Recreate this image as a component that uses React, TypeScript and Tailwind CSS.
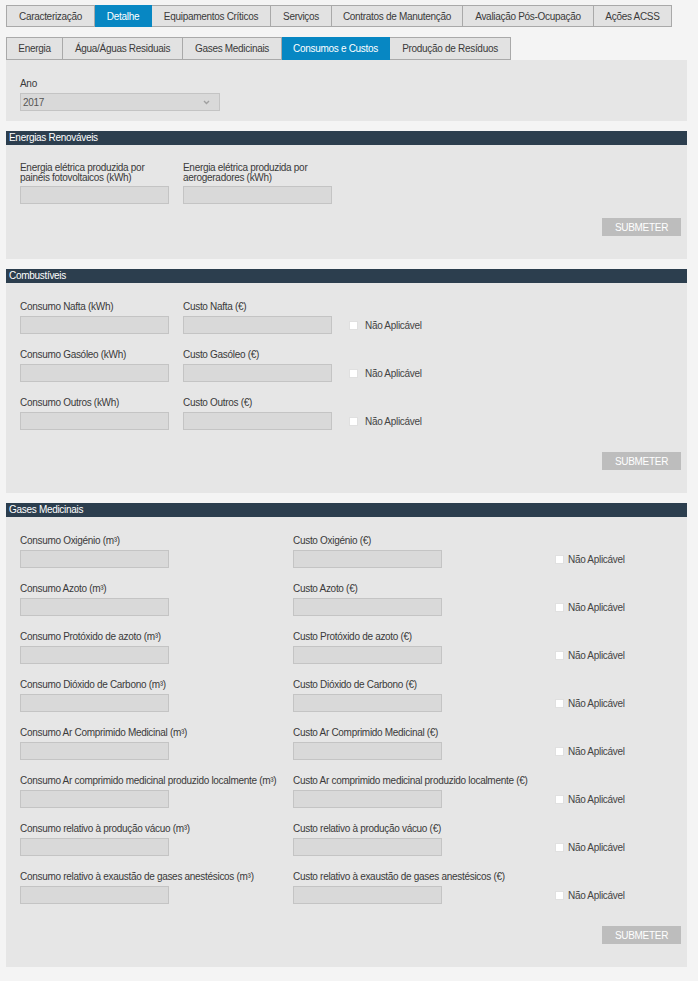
import React from "react";

const topTabs = [
  { label: "Caracterização", w: "w-[89px]" },
  { label: "Detalhe", w: "w-[57px]", active: true },
  { label: "Equipamentos Críticos", w: "w-[119px]" },
  { label: "Serviços", w: "w-[61px]" },
  { label: "Contratos de Manutenção", w: "w-[131px]" },
  { label: "Avaliação Pós-Ocupação", w: "w-[131px]" },
  { label: "Ações ACSS", w: "w-[78px]" },
];

const subTabs = [
  { label: "Energia", w: "w-[57px]" },
  { label: "Água/Águas Residuais", w: "w-[120px]" },
  { label: "Gases Medicinais", w: "w-[99px]" },
  { label: "Consumos e Custos", w: "w-[108px]", active: true },
  { label: "Produção de Resíduos", w: "w-[121px]" },
];

const combustiveis = [
  ["Consumo Nafta (kWh)", "Custo Nafta (€)"],
  ["Consumo Gasóleo (kWh)", "Custo Gasóleo (€)"],
  ["Consumo Outros (kWh)", "Custo Outros (€)"],
];

const gases = [
  ["Consumo Oxigénio (m³)", "Custo Oxigénio (€)"],
  ["Consumo Azoto (m³)", "Custo Azoto (€)"],
  ["Consumo Protóxido de azoto (m³)", "Custo Protóxido de azoto (€)"],
  ["Consumo Dióxido de Carbono (m³)", "Custo Dióxido de Carbono (€)"],
  ["Consumo Ar Comprimido Medicinal (m³)", "Custo Ar Comprimido Medicinal (€)"],
  [
    "Consumo Ar comprimido medicinal produzido localmente (m³)",
    "Custo Ar comprimido medicinal produzido localmente (€)",
  ],
  ["Consumo relativo à produção vácuo (m³)", "Custo relativo à produção vácuo (€)"],
  [
    "Consumo relativo à exaustão de gases anestésicos (m³)",
    "Custo relativo à exaustão de gases anestésicos (€)",
  ],
];

export default function App() {
  return (
    <div className="w-[698px] min-h-[981px] bg-[#f4f4f4] pt-[5px] pl-[6px] pb-[12px] font-['Liberation_Sans',Arial,sans-serif] text-[10px] tracking-[-0.3px] text-[#3a3a3a]">
      {/* main tabs */}
      <div className="flex">
        {topTabs.map((t, i) => (
          <Tab key={t.label} {...t} first={i === 0} h="h-[22px]" />
        ))}
      </div>

      {/* sub tabs */}
      <div className="flex mt-[10px]">
        {subTabs.map((t, i) => (
          <Tab key={t.label} {...t} first={i === 0} h="h-[23px]" />
        ))}
      </div>

      <div className="w-[681px]">
        {/* year selector */}
        <div className="bg-[#e6e6e6] pt-[18px] pb-[10px] pl-[14px]">
          <div className="leading-[12px]">Ano</div>
          <div className="mt-[3px] w-[200px] h-[18px] bg-[#d9d9d9] border border-[#c4c4c4] flex items-center justify-between pl-[2px] pr-[9px] text-[#555]">
            <span>2017</span>
            <svg width="7" height="5" viewBox="0 0 7 5" className="text-[#a0a0a0]">
              <path d="M1 1l2.5 2.5L6 1" stroke="currentColor" strokeWidth="1.4" fill="none" />
            </svg>
          </div>
        </div>

        {/* Energias Renováveis */}
        <SectionHeader title="Energias Renováveis" />
        <div className="bg-[#e6e6e6] pt-[18px] pb-[23px] pl-[14px] pr-[6px]">
          <div className="flex">
            <div className="w-[163px]">
              <div className="leading-[10px] h-[20px]">
                Energia elétrica produzida por
                <br />
                painéis fotovoltaicos (kWh)
              </div>
              <Input />
            </div>
            <div className="w-[166px]">
              <div className="leading-[10px] h-[20px]">
                Energia elétrica produzida por
                <br />
                aerogeradores (kWh)
              </div>
              <Input />
            </div>
          </div>
          <Submit className="mt-[14px]" />
        </div>

        {/* Combustíveis */}
        <SectionHeader title="Combustíveis" />
        <div className="bg-[#e6e6e6] pt-[17px] pb-[23px] pl-[14px] pr-[6px]">
          <div className="flex flex-col gap-[14px]">
            {combustiveis.map(([a, b]) => (
              <FieldRow key={a} a={a} b={b} colA="w-[163px]" colB="w-[166px]" gap="gap-[7px]" />
            ))}
          </div>
          <Submit className="mt-[22px]" />
        </div>

        {/* Gases Medicinais */}
        <SectionHeader title="Gases Medicinais" />
        <div className="bg-[#e6e6e6] pt-[17px] pb-[23px] pl-[14px] pr-[6px]">
          <div className="flex flex-col gap-[14px]">
            {gases.map(([a, b]) => (
              <FieldRow key={a} a={a} b={b} colA="w-[273px]" colB="w-[262px]" gap="gap-[4px]" />
            ))}
          </div>
          <Submit className="mt-[22px]" />
        </div>
      </div>
    </div>
  );
}

/* --- HELPERS --- */

const Tab = ({
  label,
  w,
  h,
  active,
  first,
}: {
  label: string;
  w: string;
  h: string;
  active?: boolean;
  first?: boolean;
}) => (
  <div
    className={`${w} ${h} flex items-center justify-center border-y border-r ${
      first ? "border-l" : ""
    } ${
      active
        ? "bg-[#0787c3] border-[#0787c3] text-white"
        : "bg-[#e2e2e2] border-[#a9a9a9] text-[#3a3a3a]"
    }`}
  >
    {label}
  </div>
);

const SectionHeader = ({ title }: { title: string }) => (
  <div className="mt-[10px] h-[14px] bg-[#2c3e4e] text-white pl-[3px] leading-[14px]">{title}</div>
);

const Input = () => (
  <div className="mt-[3px] w-[149px] h-[18px] bg-[#d9d9d9] border border-[#c4c4c4]" />
);

const Submit = ({ className }: { className: string }) => (
  <div className={`flex justify-end ${className}`}>
    <div className="w-[79px] h-[18px] bg-[#bdbdbd] text-white text-[10px] flex items-center justify-center">
      SUBMETER
    </div>
  </div>
);

const FieldRow = ({
  a,
  b,
  colA,
  colB,
  gap,
}: {
  a: string;
  b: string;
  colA: string;
  colB: string;
  gap: string;
}) => (
  <div className="flex">
    <div className={colA}>
      <div className="leading-[13px] whitespace-nowrap">{a}</div>
      <Input />
    </div>
    <div className={colB}>
      <div className="leading-[13px] whitespace-nowrap">{b}</div>
      <Input />
    </div>
    <div className={`pt-[16px] h-[34px] flex items-center ${gap} text-[#444]`}>
      <span className="w-[9px] h-[9px] bg-white border border-[#e0e0e0]" />
      <span>Não Aplicável</span>
    </div>
  </div>
);
